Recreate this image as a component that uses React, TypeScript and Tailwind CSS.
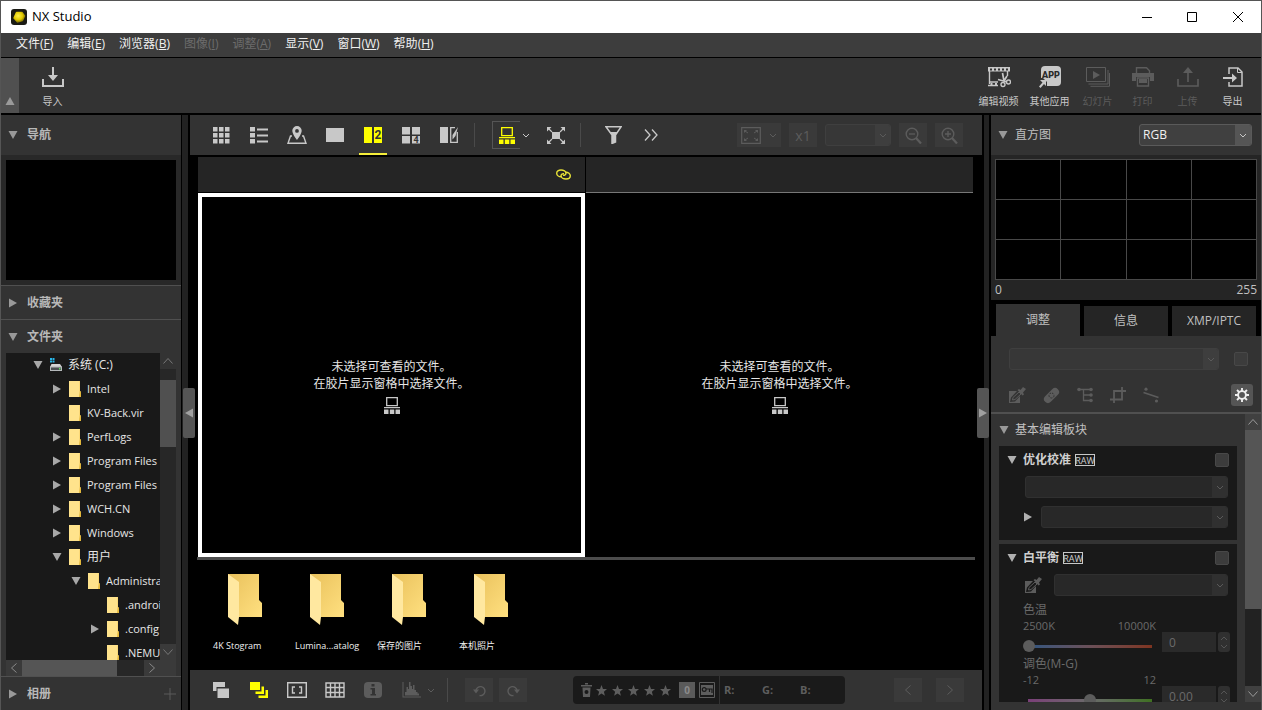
import type { ReactNode } from "react";

type IconProps = { className?: string };

type SvgProps = { w: number; h: number; className?: string; children: ReactNode };

const Svg = ({ w, h, className = "", children }: SvgProps) => (
  <svg
    width={w}
    height={h}
    viewBox={`0 0 ${w} ${h}`}
    fill="currentColor"
    className={`shrink-0 ${className}`}
    aria-hidden="true"
  >
    {children}
  </svg>
);

const DownTriangle = ({ className }: IconProps) => (
  <Svg w={10} h={8} className={className}>
    <path d="M0.5 0h9L5 8z" />
  </Svg>
);

const RightTriangle = ({ className }: IconProps) => (
  <Svg w={8} h={10} className={className}>
    <path d="M0 0.5v9L8 5z" />
  </Svg>
);

const Chevron = ({ className }: IconProps) => (
  <Svg w={8} h={5} className={className}>
    <path d="M1 1l3 3 3-3" fill="none" stroke="currentColor" />
  </Svg>
);

const WideChevron = ({ className }: IconProps) => (
  <Svg w={10} h={6} className={className}>
    <path d="M0.500 0.500l4.500 5 4.500-5" fill="none" stroke="currentColor" />
  </Svg>
);

// title bar

const AppLogo = () => (
  <Svg w={16} h={16}>
    <defs>
      <radialGradient id="logo" cx="0.4" cy="0.35" r="0.7">
        <stop offset="0" stopColor="#fff04a" />
        <stop offset="0.6" stopColor="#e0c800" />
        <stop offset="1" stopColor="#7a6a00" />
      </radialGradient>
    </defs>
    <rect width="16" height="16" rx="3" fill="#1a1a14" />
    <path
      d="M5.500 3.500h5.500l2.500 3.500-2 4.500-5 1.500L3 9z"
      fill="url(#logo)"
      stroke="url(#logo)"
      strokeWidth="1.500"
      strokeLinejoin="round"
    />
  </Svg>
);

const TitleBar = () => (
  <header className="flex h-8 shrink-0 items-center bg-white text-black">
    <div className="flex flex-1 items-center gap-[5px] pl-[10px]">
      <AppLogo />
      <h1 className="text-[13px]">NX Studio</h1>
    </div>
    <button aria-label="最小化" className="flex h-full w-[45px] items-center justify-center">
      <Svg w={10} h={10}>
        <path d="M0 5h10v1H0z" />
      </Svg>
    </button>
    <button aria-label="最大化" className="flex h-full w-[46px] items-center justify-center">
      <Svg w={10} h={10}>
        <path d="M0.5 0.5h9v9h-9z" fill="none" stroke="currentColor" />
      </Svg>
    </button>
    <button aria-label="关闭" className="flex h-full w-[46px] items-center justify-center">
      <Svg w={10} h={10}>
        <path d="M0 0l10 10M10 0L0 10" stroke="currentColor" />
      </Svg>
    </button>
  </header>
);

// menu bar

const menus = [
  { label: "文件", key: "F" },
  { label: "编辑", key: "E" },
  { label: "浏览器", key: "B" },
  { label: "图像", key: "I", disabled: true },
  { label: "调整", key: "A", disabled: true },
  { label: "显示", key: "V" },
  { label: "窗口", key: "W" },
  { label: "帮助", key: "H" },
];

const MenuBar = () => (
  <nav className="flex h-[25px] shrink-0 items-center gap-[14px] border-b border-black bg-[#3d3d3d] pb-[2px] pl-[15px] text-[12px] text-[#f0f0f0]">
    {menus.map((menu) => (
      <button key={menu.key} disabled={menu.disabled} className="whitespace-nowrap disabled:text-[#6c6c6c]">
        {menu.label}(<span className="underline underline-offset-1">{menu.key}</span>)
      </button>
    ))}
  </nav>
);

// main tool bar

const ImportIcon = () => (
  <Svg w={22} h={20}>
    <path d="M10 0h2v8h4l-5 6-5-6h4z" />
    <path d="M1 12v7h20v-7" fill="none" stroke="currentColor" strokeWidth="2" />
  </Svg>
);

const VideoIcon = () => (
  <Svg w={24} h={22}>
    <path d="M1 1h22v4.500H1z" />
    <path d="M3 2.500h2v2H3zM7 2.500h2v2H7zM11 2.500h2v2h-2zM15 2.500h2v2h-2zM19 2.500h2v2h-2z" fill="#333" />
    <path d="M2.500 5v13M2 16h9M1 19.500h10M20.500 5v5" fill="none" stroke="currentColor" strokeWidth="1.400" />
    <path d="M3.500 17h2v2h-2zM8 17h2v2H8z" />
    <path d="M15.500 7l1.500 8M11 13.500l9 2.500M17 15l3-5" fill="none" stroke="currentColor" strokeWidth="1.700" />
    <circle cx="16" cy="18.500" r="2" fill="none" stroke="currentColor" strokeWidth="1.400" />
    <circle cx="21.500" cy="16" r="2" fill="none" stroke="currentColor" strokeWidth="1.400" />
  </Svg>
);

const AppsIcon = () => (
  <Svg w={24} h={22}>
    <rect x="3" y="0" width="20" height="20" rx="4" />
    <path d="M0 12h5l4 4v6H0z" fill="#333" />
    <path d="M2 14h6v6l-2-2-3.500 4L1 20.500 4.500 16.500z" />
    <text
      x="13"
      y="12"
      fontSize="9"
      fontWeight="900"
      textAnchor="middle"
      fill="#2a2a2a"
      fontFamily="Roboto, sans-serif"
    >
      APP
    </text>
  </Svg>
);

const SlidesIcon = () => (
  <Svg w={24} h={20}>
    <path d="M0.500 0.500h19v14h-19z" fill="none" stroke="currentColor" />
    <path d="M7 4l7 4-7 4z" />
    <path d="M2.500 17h19.500V3M4.500 19.300h19V6" fill="none" stroke="currentColor" />
  </Svg>
);

const PrintIcon = () => (
  <Svg w={22} h={20}>
    <path d="M4.500 6V0.700h10l3 3V6" fill="none" stroke="currentColor" strokeWidth="1.400" />
    <path d="M0 6h22v8h-4v-4H4v4H0z" />
    <path d="M5.500 11h11v8h-11z" fill="none" stroke="currentColor" strokeWidth="1.400" />
    <path d="M7 12h8v4H7z" />
  </Svg>
);

const UploadIcon = () => (
  <Svg w={22} h={20}>
    <path d="M10.200 15V6H6l5-6 5 6h-4.200v9z" />
    <path d="M1 12v7h20v-7" fill="none" stroke="currentColor" strokeWidth="1.600" />
  </Svg>
);

const ExportIcon = () => (
  <Svg w={20} h={20}>
    <path d="M6 7V1h9l4 4v14H6v-4" fill="none" stroke="currentColor" strokeWidth="1.500" />
    <path d="M14.500 1v4.500H19" fill="none" stroke="currentColor" />
    <path d="M0 10h9V6.500l5 4.500-5 4.500V12H0z" />
  </Svg>
);

type ToolButtonProps = { label: string; icon: ReactNode; width?: string; disabled?: boolean };

const ToolButton = ({ label, icon, width = "w-[45px]", disabled }: ToolButtonProps) => (
  <button
    disabled={disabled}
    className={`flex flex-col items-center whitespace-nowrap text-[10px] leading-4 text-[#c8c8c8] disabled:text-[#5c5c5c] ${width}`}
  >
    <span className="flex h-7 items-center justify-center">{icon}</span>
    <span className="mt-[2px]">{label}</span>
  </button>
);

const MainToolBar = () => (
  <div className="flex h-[57px] shrink-0 border-b-2 border-black bg-[#333]">
    <button aria-label="收起工具栏" className="flex w-[18px] items-end justify-center bg-[#505050] pb-2 text-[#9a9a9a]">
      <DownTriangle className="rotate-180" />
    </button>
    <div className="flex flex-1 items-center justify-between pr-[6px] pl-[11px]">
      <ToolButton label="导入" icon={<ImportIcon />} />
      <div className="flex">
        <ToolButton label="编辑视频" width="w-[51px]" icon={<VideoIcon />} />
        <ToolButton label="其他应用" width="w-[51px]" icon={<AppsIcon />} />
        <ToolButton label="幻灯片" disabled icon={<SlidesIcon />} />
        <ToolButton label="打印" disabled icon={<PrintIcon />} />
        <ToolButton label="上传" disabled icon={<UploadIcon />} />
        <ToolButton label="导出" icon={<ExportIcon />} />
      </div>
    </div>
  </div>
);

// left side

const FolderIcon = () => (
  <Svg w={12} h={16}>
    <path d="M0 0h11v10l1 1v5H0z" fill="#fbd978" />
    <path d="M0 0h10v16H0z" fill="#ffe38c" />
    <path d="M11 10l1 1v5h-2z" fill="#e3b83c" />
  </Svg>
);

const DriveIcon = () => (
  <Svg w={12} h={14}>
    <path d="M0 0h2v2H0zM2.500 0h2v2h-2zM0 2.500h2v2H0zM2.500 2.500h2v2h-2z" fill="#29b6e8" />
    <path d="M1.500 6h8.500l2 3H0z" fill="#d4d4d4" />
    <path d="M0 8.500h12V13H0z" fill="#b5b9bb" />
    <path d="M1 9.500h10v2.500H1z" fill="#4b5052" />
    <path d="M9 10h1.500v1.500H9z" fill="#5fe05f" />
  </Svg>
);

type TreeNode = { name: string; level: string; open?: boolean; closed?: boolean; drive?: boolean; cjk?: boolean };

const LEVELS = ["pl-[26px]", "pl-[45px]", "pl-[64px]", "pl-[83px]"];

const tree: TreeNode[] = [
  { name: "系统 (C:)", level: LEVELS[0], open: true, drive: true, cjk: true },
  { name: "Intel", level: LEVELS[1], closed: true },
  { name: "KV-Back.vir", level: LEVELS[1] },
  { name: "PerfLogs", level: LEVELS[1], closed: true },
  { name: "Program Files", level: LEVELS[1], closed: true },
  { name: "Program Files", level: LEVELS[1], closed: true },
  { name: "WCH.CN", level: LEVELS[1], closed: true },
  { name: "Windows", level: LEVELS[1], closed: true },
  { name: "用户", level: LEVELS[1], open: true, cjk: true },
  { name: "Administrator", level: LEVELS[2], open: true },
  { name: ".android", level: LEVELS[3] },
  { name: ".config", level: LEVELS[3], closed: true },
  { name: ".NEMU", level: LEVELS[3] },
];

const FolderTree = () => (
  <div className="mx-[5px] flex min-h-0 flex-1 flex-col bg-[#191919]">
    <div className="flex min-h-0 flex-1">
      <ul className="flex-1 overflow-hidden text-[#e6e6e6]">
        {tree.map((node, i) => (
          <li key={i} className={`flex h-6 items-center whitespace-nowrap ${node.level}`}>
            <span className="flex w-[18px] shrink-0 items-center pl-px text-[#a8a8a8]">
              {node.open && <DownTriangle />}
              {node.closed && <RightTriangle className="ml-px" />}
            </span>
            {node.drive ? <DriveIcon /> : <FolderIcon />}
            <span className={`ml-[6px] ${node.cjk ? "text-[12px]" : "text-[11px]"}`}>{node.name}</span>
          </li>
        ))}
      </ul>
      <div className="flex w-4 shrink-0 flex-col bg-[#272727] text-[#777]">
        <button aria-label="向上滚动" className="flex h-4 items-center justify-center bg-[#333]">
          <WideChevron className="rotate-180" />
        </button>
        <div className="mt-[11px] h-[67px] bg-[#505050]" />
        <div className="flex-1" />
        <button aria-label="向下滚动" className="flex h-4 items-center justify-center bg-[#3a3a3a]">
          <WideChevron />
        </button>
      </div>
    </div>
    <div className="flex h-4 shrink-0 bg-[#272727] text-[#8a8a8a]">
      <button aria-label="向左滚动" className="flex w-4 items-center justify-center bg-[#3a3a3a]">
        <WideChevron className="rotate-90" />
      </button>
      <div className="w-[95px] bg-[#555]" />
      <div className="flex-1" />
      <button aria-label="向右滚动" className="flex w-4 items-center justify-center bg-[#3a3a3a]">
        <WideChevron className="-rotate-90" />
      </button>
      <div className="w-4 bg-[#3a3a3a]" />
    </div>
  </div>
);

type PanelTitleProps = { title: string; open?: boolean; className?: string; children?: ReactNode };

const PanelTitle = ({ title, open, className = "", children }: PanelTitleProps) => (
  <div className={`flex shrink-0 items-center bg-[#333] pr-[5px] pl-[6px] text-[#b8b8b8] ${className}`}>
    <button className="flex flex-1 items-center text-left text-[12px] font-bold">
      <span className="flex w-5 pl-px text-[#999]">
        {open ? <DownTriangle /> : <RightTriangle className="ml-px" />}
      </span>
      {title}
    </button>
    {children}
  </div>
);

const LeftPanel = () => (
  <aside className="flex w-[180px] shrink-0 flex-col bg-[#333]">
    <PanelTitle title="导航" open className="h-10" />
    <div className="bg-[#282828] p-[5px]">
      <div className="h-[120px] bg-black" />
    </div>
    <PanelTitle title="收藏夹" className="h-[34px] border-t border-[#505050]" />
    <PanelTitle title="文件夹" open className="h-[34px] border-t border-[#505050]" />
    <FolderTree />
    <PanelTitle title="相册" className="h-[34px] border-t border-[#505050]">
      <button aria-label="添加相册" className="text-[#5a5a5a]">
        <Svg w={12} h={12}>
          <path d="M0 6h12M6 0v12" stroke="currentColor" />
        </Svg>
      </button>
    </PanelTitle>
  </aside>
);

// center tool bar

const GridIcon = () => (
  <Svg w={17} h={17}>
    {[0, 6, 12].map((y) => [0, 6, 12].map((x) => <rect key={`${x}-${y}`} x={x} y={y} width="4.500" height="4.500" />))}
  </Svg>
);

const ListIcon = () => (
  <Svg w={18} h={17}>
    <path d="M0 0h5v4.500H0zM0 6h5v4.500H0zM0 12h5v4.500H0zM7 1.500h11v2H7zM7 7.500h11v2H7zM7 13.500h11v2H7z" />
  </Svg>
);

const MapIcon = () => (
  <Svg w={20} h={18}>
    <path d="M10 0a4.700 4.700 0 0 1 4.700 4.700C14.700 8 10 14 10 14S5.300 8 5.300 4.700A4.700 4.700 0 0 1 10 0zm0 3a1.900 1.900 0 1 0 0 3.800A1.900 1.900 0 0 0 10 3z" />
    <path d="M5 10H3.500L1 17.300h18L16.500 10H15" fill="none" stroke="currentColor" strokeWidth="1.400" />
  </Svg>
);

const SingleIcon = () => (
  <Svg w={18} h={14}>
    <path d="M0 0h18v14H0z" />
  </Svg>
);

const TwoIcon = () => (
  <Svg w={18} h={16}>
    <path d="M0 0h8v16H0zM10 0h8v16h-8z" />
    <text x="14" y="12" fontSize="12" fontWeight="700" textAnchor="middle" fill="#333" fontFamily="Roboto, sans-serif">
      2
    </text>
  </Svg>
);

const FourIcon = () => (
  <Svg w={18} h={17}>
    <path d="M0 0h8v7.500H0zM10 0h8v7.500h-8zM0 9h8v7.500H0zM10 9h8v7.500h-8z" />
    <text x="14" y="16" fontSize="9" fontWeight="700" textAnchor="middle" fill="#333" fontFamily="Roboto, sans-serif">
      4
    </text>
  </Svg>
);

const BeforeAfterIcon = () => (
  <Svg w={18} h={16}>
    <path d="M0 0h8v16H0z" />
    <path d="M15 0.700h-4.300v14.600h6.600V5" fill="none" stroke="currentColor" strokeWidth="1.300" />
    <path d="M18 0l-2.500 9-3 3.500v-4.500z" />
  </Svg>
);

const FilmIcon = ({ className }: IconProps) => (
  <Svg w={16} h={17} className={className}>
    <path d="M2.700 0.700h10.600v8H2.700z" fill="none" stroke="currentColor" strokeWidth="1.300" />
    <path d="M0 10h16v1.200H0zM0 12.500h4.500V17H0zM5.800 12.500h4.500V17H5.800zM11.500 12.500H16V17h-4.500z" />
  </Svg>
);

const FullIcon = () => (
  <Svg w={18} h={17}>
    <path d="M5 5h8v7H5zM0 0h4.500L0 4.500zM18 0v4.500L13.500 0zM0 17v-4.500L4.500 17zM18 17h-4.500l4.500-4.500z" />
    <path d="M1 1l4 4M17 1l-4 4M1 16l4-4M17 16l-4-4" stroke="currentColor" strokeWidth="1.200" />
  </Svg>
);

const FilterIcon = () => (
  <Svg w={17} h={18}>
    <path d="M1 0.800h15L10.500 9v7L7 17.500V9z" fill="none" stroke="currentColor" strokeWidth="1.500" />
    <path d="M4.500 6h8L10.500 9v7L7 17.500V9z" />
  </Svg>
);

const MoreIcon = () => (
  <Svg w={14} h={12}>
    <path d="M1 0.500L6 6l-5 5.500M8 0.500L13 6l-5 5.500" fill="none" stroke="currentColor" strokeWidth="1.300" />
  </Svg>
);

const FitIcon = () => (
  <Svg w={20} h={17}>
    <path d="M0.700 0.700h18.600v15.600H0.700z" fill="none" stroke="currentColor" strokeWidth="1.200" />
    <path d="M3 3h3L3 6zM17 3v3l-3-3zM3 14v-3l3 3zM17 14h-3l3-3z" />
    <path d="M4 4l3 2M16 4l-3 2M4 13l3-2M16 13l-3-2" stroke="currentColor" />
  </Svg>
);

const ZoomIcon = ({ plus }: { plus?: boolean }) => (
  <Svg w={17} h={17}>
    <circle cx="7" cy="7" r="5.800" fill="none" stroke="currentColor" strokeWidth="1.400" />
    <path d="M11 11l5 5.500" stroke="currentColor" strokeWidth="2.200" />
    <path d={plus ? "M4 7h6M7 4v6" : "M4 7h6"} stroke="currentColor" strokeWidth="1.300" />
  </Svg>
);

const viewModes = [
  { label: "缩略图", icon: <GridIcon /> },
  { label: "缩略图列表", icon: <ListIcon /> },
  { label: "地图", icon: <MapIcon /> },
  { label: "单张图像", icon: <SingleIcon /> },
  { label: "两张图像", icon: <TwoIcon />, active: true },
  { label: "四张图像", icon: <FourIcon /> },
  { label: "调整前后", icon: <BeforeAfterIcon /> },
];

const ghost = "flex h-6 items-center justify-center bg-[#3a3a3a] text-[#5c5c5c]";

type SelectProps = { label: string; className?: string; dark?: boolean };

// an empty, disabled drop-down
const Select = ({ label, className = "", dark }: SelectProps) => (
  <div
    className={`flex overflow-hidden rounded-[3px] border ${
      dark ? "border-[#303030] bg-[#282828] text-[#5a5a5a]" : "border-[#3f3f3f] bg-[#373737] text-[#5a5a5a]"
    } ${className}`}
  >
    <select disabled aria-label={label} className="min-w-0 flex-1 appearance-none" />
    <span className={`flex w-[15px] items-center justify-center ${dark ? "bg-[#303030]" : "bg-[#3e3e3e]"}`}>
      <Chevron />
    </span>
  </div>
);

const ViewToolBar = () => (
  <div className="flex h-[42px] shrink-0 items-center border-b-2 border-black bg-[#333] pr-[19px] pl-3 text-[#c8c8c8]">
    {viewModes.map((mode) => (
      <button
        key={mode.label}
        aria-label={mode.label}
        className={`mx-[5px] flex h-full w-7 items-center justify-center border-y-2 ${
          mode.active ? "border-t-transparent border-b-[#f5ee3a] text-[#ffff00]" : "border-transparent"
        }`}
      >
        {mode.icon}
      </button>
    ))}
    <div className="mr-[17px] ml-[6px] h-6 w-px bg-[#4a4a4a]" />
    <button
      aria-label="胶片显示"
      className="flex h-7 w-7 items-center justify-center border border-r-0 border-[#555] text-[#ffff00]"
    >
      <FilmIcon />
    </button>
    <button aria-label="胶片显示选项" className="mr-[17px] ml-[2px]">
      <Chevron />
    </button>
    <button aria-label="全屏">
      <FullIcon />
    </button>
    <div className="mr-6 ml-[15px] h-6 w-px bg-[#4a4a4a]" />
    <button aria-label="筛选">
      <FilterIcon />
    </button>
    <button aria-label="更多" className="ml-[22px]">
      <MoreIcon />
    </button>
    <div className="ml-auto flex items-center gap-2">
      <button disabled aria-label="适合屏幕" className={`${ghost} w-11 gap-2`}>
        <FitIcon />
        <Chevron />
      </button>
      <button disabled className={`${ghost} w-7 text-[14px]`}>
        x1
      </button>
      <Select label="缩放" className="h-[22px] w-[66px]" />
      <button disabled aria-label="缩小" className={`${ghost} w-7`}>
        <ZoomIcon />
      </button>
      <button disabled aria-label="放大" className={`${ghost} w-7`}>
        <ZoomIcon plus />
      </button>
    </div>
  </div>
);

// viewer

const LinkIcon = () => (
  <Svg w={15} h={11}>
    <path
      d="M5.500 7.800C2.500 7.800 0.700 6 0.700 4.200S2.500 1 5 1s5 1.300 5 3.200c0 1.500-1.500 2.300-3 2"
      fill="none"
      stroke="currentColor"
      strokeWidth="1.400"
    />
    <path
      d="M9.500 3.200c3 0 4.800 1.800 4.800 3.600S12.500 10 10 10 5 8.700 5 6.800c0-1.500 1.500-2.300 3-2"
      fill="none"
      stroke="currentColor"
      strokeWidth="1.400"
    />
  </Svg>
);

const ViewerPane = ({ selected }: { selected?: boolean }) => (
  <section className="flex min-h-0 flex-col">
    <div
      className={`flex h-9 shrink-0 items-center justify-end border-b bg-[#252525] pr-[14px] ${
        selected ? "border-black" : "border-[#777]"
      }`}
    >
      {selected && (
        <button aria-label="同步滚动" className="text-[#e8e337]">
          <LinkIcon />
        </button>
      )}
    </div>
    <div
      className={`flex flex-1 flex-col items-center justify-center border-4 bg-black pt-[22px] text-center text-[12px] leading-[17px] text-[#e6e6e6] ${
        selected ? "border-white" : "border-black"
      }`}
    >
      <p>未选择可查看的文件。</p>
      <p>在胶片显示窗格中选择文件。</p>
      <FilmIcon className="mt-[5px] text-[#c8c8c8]" />
    </div>
  </section>
);

// film strip

const BigFolder = () => (
  <Svg w={34} h={51}>
    <defs>
      <linearGradient id="folder" x1="0" y1="0" x2="1" y2="1">
        <stop offset="0" stopColor="#e9c15c" />
        <stop offset="1" stopColor="#ffe080" />
      </linearGradient>
    </defs>
    <path d="M0 0h31v26l3 3v14H0z" fill="url(#folder)" />
    <path d="M0 0l11 8v35l-1 8L0 43z" fill="#ffe8a0" />
  </Svg>
);

const folders = ["4K Stogram", "Lumina...atalog", "保存的图片", "本机照片"];

const FilmStrip = () => (
  <ul className="flex h-[110px] shrink-0 bg-black pt-[14px] pl-[23px]">
    {folders.map((name) => (
      <li key={name} className="w-[82px] whitespace-nowrap text-[9px] leading-3 text-[#f0f0f0]">
        <button className="flex flex-col text-left">
          <span className="pl-[15px]">
            <BigFolder />
          </span>
          <span className="mt-[15px]">{name}</span>
        </button>
      </li>
    ))}
  </ul>
);

// bottom bar

const StackTwoIcon = () => (
  <Svg w={16} h={16}>
    <path d="M0 0h12v5H3.500v4H0z" />
    <path d="M4.500 6.500H16V16H4.500z" />
  </Svg>
);

const StackThreeIcon = () => (
  <Svg w={18} h={16}>
    <path d="M0 0h10v8H0z" />
    <path d="M11.500 4.500H14V12H5.500V9.500h6zM15.500 8H18v8H8.500v-2.500h7z" />
  </Svg>
);

const FocusIcon = () => (
  <Svg w={20} h={16}>
    <path d="M0.700 0.700h18.600v14.600H0.700z" fill="none" stroke="currentColor" strokeWidth="1.400" />
    <path d="M8 5H5.500v6H8M12 5h2.500v6H12" fill="none" stroke="currentColor" strokeWidth="1.400" />
  </Svg>
);

const TableIcon = () => (
  <Svg w={20} h={16}>
    <path
      d="M1 1h18v14H1zM1 5.500h18M1 10.500h18M5.500 1v14M10 1v14M14.500 1v14"
      fill="none"
      stroke="currentColor"
      strokeWidth="1.400"
    />
  </Svg>
);

const InfoIcon = () => (
  <Svg w={18} h={16}>
    <rect width="18" height="16" rx="4" />
    <path d="M7.500 2h3v2.500h-3zM6.500 6H11v6h1v1.500H6.500V12H8V7.500H6.500z" fill="#333" />
  </Svg>
);

const HistogramIcon = () => (
  <Svg w={19} h={16}>
    <path d="M0.500 0h1v14.500H19v1H0.500z" />
    <path d="M3 13.500V10h1.500V5H6v2h1V0h1.500v4H10v3h1V3h1.500v5H14v2h1.500v1.500H17v2z" />
  </Svg>
);

const RotateIcon = ({ right }: { right?: boolean }) => (
  <Svg w={13} h={13} className={right ? "-scale-x-100" : ""}>
    <path d="M3 6.500a4.500 4.500 0 1 1 3.500 5" fill="none" stroke="currentColor" strokeWidth="1.400" />
    <path d="M0 5.500h6L3 9.500z" />
  </Svg>
);

const Star = () => (
  <Svg w={11} h={11}>
    <path d="M5.500 0l1.500 3.900 4 .2-3.100 2.600 1 4.100-3.400-2.300-3.400 2.300 1-4.100L0 4.100l4-.2z" />
  </Svg>
);

const TrashIcon = () => (
  <Svg w={11} h={14}>
    <path d="M4 0h3v1.500H4zM0 2h11v1.500H0z" />
    <path fillRule="evenodd" d="M1.500 4.500h8L9 14H2zM5.500 7a2 2 0 1 0 0 4 2 2 0 0 0 0-4z" />
  </Svg>
);

const KeyIcon = () => (
  <Svg w={16} h={16}>
    <path d="M0.500 0.500h15v15H0.500z" fill="none" stroke="currentColor" />
    <path d="M2 3h12v10H2z" />
    <path d="M7 7h6v4M10.500 7v3" fill="none" stroke="#1a1a1a" strokeWidth="1.200" />
    <circle cx="5.200" cy="7.500" r="1.900" fill="none" stroke="#1a1a1a" strokeWidth="1.200" />
  </Svg>
);

const RatingBar = () => (
  <div className="ml-[46px] flex h-7 w-[272px] items-center rounded-[4px] bg-[#1a1a1a] pl-2 text-[#5e5e5e]">
    <button disabled aria-label="删除">
      <TrashIcon />
    </button>
    <div className="ml-1 flex gap-[5px]">
      {[1, 2, 3, 4, 5].map((n) => (
        <button key={n} disabled aria-label={`${n} 星`}>
          <Star />
        </button>
      ))}
    </div>
    <button
      disabled
      className="ml-2 flex size-4 items-center justify-center bg-[#5a5a5a] text-[10px] font-bold text-[#8a8a8a]"
    >
      0
    </button>
    <button disabled aria-label="保护" className="ml-1">
      <KeyIcon />
    </button>
    <dl className="ml-1 flex h-full flex-1 items-center border-l border-[#333] pl-1 text-[11px] font-bold">
      <dt className="w-[38px]">R:</dt>
      <dt className="w-[38px]">G:</dt>
      <dt>B:</dt>
    </dl>
  </div>
);

const BottomBar = () => (
  <div className="flex h-10 shrink-0 items-center bg-[#333] pr-[18px] pl-[21px] text-[#c8c8c8]">
    <div className="flex items-center gap-[18px]">
      <button aria-label="叠放" className="flex w-5 justify-center">
        <StackTwoIcon />
      </button>
      <button aria-label="展开" className="flex w-5 justify-center text-[#ffff00]">
        <StackThreeIcon />
      </button>
      <button aria-label="对焦点" className="flex w-5 justify-center">
        <FocusIcon />
      </button>
      <button aria-label="网格" className="flex w-5 justify-center">
        <TableIcon />
      </button>
      <button disabled aria-label="信息" className="flex w-5 justify-center text-[#5c5c5c]">
        <InfoIcon />
      </button>
      <button disabled aria-label="直方图显示" className="flex w-5 justify-center text-[#5c5c5c]">
        <HistogramIcon />
      </button>
    </div>
    <Chevron className="ml-[6px] text-[#5c5c5c]" />
    <div className="mr-[17px] ml-3 h-6 w-px bg-[#4a4a4a]" />
    <button disabled aria-label="向左旋转" className={`${ghost} w-7`}>
      <RotateIcon />
    </button>
    <button disabled aria-label="向右旋转" className={`${ghost} ml-[6px] w-7`}>
      <RotateIcon right />
    </button>
    <RatingBar />
    <div className="ml-auto flex gap-[14px]">
      <button disabled aria-label="上一张" className={`${ghost} w-7`}>
        <WideChevron className="rotate-90" />
      </button>
      <button disabled aria-label="下一张" className={`${ghost} w-7`}>
        <WideChevron className="-rotate-90" />
      </button>
    </div>
  </div>
);

const Center = () => (
  <main className="flex min-w-0 flex-1 flex-col bg-black">
    <ViewToolBar />
    <div className="grid min-h-0 flex-1 grid-cols-2 gap-px pr-[9px] pl-2">
      <ViewerPane selected />
      <ViewerPane />
    </div>
    <div className="mx-[7px] h-[3px] shrink-0 bg-[#4c4c4c]" />
    <FilmStrip />
    <BottomBar />
  </main>
);

// right side

const PickerIcon = () => (
  <Svg w={17} h={16}>
    <path d="M0 4h8L2 10.500 1 15l5-.5L11 9v7H0z" />
    <path d="M3.500 13l.5-2.500L10 5l2 2-6 5.500z" fill="none" stroke="currentColor" />
    <path d="M8.500 3l1.500-1 1.500 1L14 0l3 2-3 3.500 1 2-1.500 1z" />
  </Svg>
);

const HealIcon = () => (
  <Svg w={17} h={17}>
    <rect x="-0.500" y="4.500" width="18" height="8" rx="4" transform="rotate(-45 8.500 8.500)" />
    <circle cx="8.500" cy="8.500" r="2.500" fill="none" stroke="#333" strokeDasharray="2 1" />
  </Svg>
);

const PointsIcon = () => (
  <Svg w={16} h={16}>
    <path d="M2 2.500h12M6.500 2.500v11h7M6.500 8h7" fill="none" stroke="currentColor" strokeWidth="1.300" />
    <circle cx="2" cy="2.500" r="1.800" />
    <circle cx="14" cy="2.500" r="1.800" />
    <circle cx="14" cy="8" r="1.800" />
    <circle cx="14" cy="13.500" r="1.800" />
  </Svg>
);

const CropIcon = () => (
  <Svg w={16} h={16}>
    <path d="M4 16V4h12M0 12.500h12V0M0 12.500h4M12 4v8.500" fill="none" stroke="currentColor" strokeWidth="1.800" />
  </Svg>
);

const StraightenIcon = () => (
  <Svg w={16} h={16}>
    <path d="M0.500 5.500l15 5" stroke="currentColor" strokeWidth="1.600" />
    <circle cx="3" cy="2.200" r="1.600" />
    <circle cx="13.500" cy="14" r="1.600" />
  </Svg>
);

const GearIcon = () => (
  <Svg w={14} h={14}>
    <circle cx="7" cy="7" r="3.900" fill="none" stroke="currentColor" strokeWidth="1.900" />
    <path
      d="M7 0v3M7 11v3M0 7h3M11 7h3M2 2l2.200 2.200M9.800 9.800L12 12M12 2L9.800 4.200M4.200 9.800L2 12"
      stroke="currentColor"
      strokeWidth="1.900"
    />
  </Svg>
);

const CheckBox = ({ label }: { label: string }) => (
  <input
    type="checkbox"
    disabled
    aria-label={label}
    className="size-[14px] shrink-0 appearance-none rounded-[2px] border border-[#484848] bg-[#3c3c3c]"
  />
);

const RawBadge = () => (
  <span className="ml-1 flex h-3 w-5 items-center justify-center border border-[#c8c8c8] text-[9px] leading-none font-normal text-[#d0d0d0]">
    RAW
  </span>
);

const CardTitle = ({ title }: { title: string }) => (
  <div className="flex h-7 items-center justify-between px-2">
    <button className="flex items-center text-[12px] font-bold text-[#d0d0d0]">
      <span className="w-4 text-[#b0b0b0]">
        <DownTriangle />
      </span>
      {title}
      <RawBadge />
    </button>
    <CheckBox label={title} />
  </div>
);

type SliderRowProps = {
  id: string;
  title: string;
  min: number;
  max: number;
  unit?: string;
  value: number;
  shown: string;
  track: string;
};

const SliderRow = ({ id, title, min, max, unit = "", value, shown, track }: SliderRowProps) => (
  <div className="flex h-[54px] flex-col pr-[7px] pl-6 text-[12px] leading-4 text-[#6a6a6a]">
    <label htmlFor={id}>{title}</label>
    <div className="flex">
      <div className="flex w-[133px] flex-col">
        <div className="flex justify-between text-[11px]">
          <span>{min + unit}</span>
          <span>{max + unit}</span>
        </div>
        <div className="flex h-6 items-center">
          <input
            id={id}
            type="range"
            disabled
            min={min}
            max={max}
            defaultValue={value}
            className={`h-3 w-full appearance-none bg-[length:124px_3px] bg-[position:5px_5px] bg-no-repeat [&::-webkit-slider-thumb]:size-3 [&::-webkit-slider-thumb]:appearance-none [&::-webkit-slider-thumb]:rounded-full [&::-webkit-slider-thumb]:bg-[#5c5c5c] ${track}`}
          />
        </div>
      </div>
      <input
        aria-label={`${title}数值`}
        disabled
        defaultValue={shown}
        className="mt-[14px] ml-[6px] h-5 w-[54px] bg-[#2a2a2a] pl-[7px] text-[12px] text-[#6a6a6a]"
      />
      <div className="mt-[14px] ml-[2px] flex h-5 w-3 flex-col items-center justify-center gap-[3px] rounded-[3px] bg-[#303030] text-[#555]">
        <Chevron className="rotate-180" />
        <Chevron />
      </div>
    </div>
  </div>
);

const tabs = ["调整", "信息", "XMP/IPTC"];

const RightPanel = () => (
  <aside className="flex w-[270px] shrink-0 flex-col bg-[#333] text-[12px] text-[#c0c0c0]">
    <div className="flex h-10 shrink-0 items-center justify-between pr-[9px] pl-[7px]">
      <button className="flex items-center">
        <span className="w-[17px] text-[#999]">
          <DownTriangle />
        </span>
        直方图
      </button>
      <div className="flex h-[22px] w-[113px] overflow-hidden rounded-[3px] border border-[#5a5a5a] bg-[#404040]">
        <select aria-label="通道" className="min-w-0 flex-1 appearance-none pl-[3px] text-[#f0f0f0]">
          <option>RGB</option>
        </select>
        <span className="flex w-4 items-center justify-center bg-[#555] text-[#c8c8c8]">
          <Chevron />
        </span>
      </div>
    </div>

    <div className="shrink-0 bg-[#252525] px-1 pt-1">
      <div className="grid h-[121px] grid-cols-4 grid-rows-3 gap-px border border-[#484848] bg-[#484848]">
        {Array.from({ length: 12 }, (_, i) => (
          <div key={i} className="bg-black" />
        ))}
      </div>
      <div className="flex h-5 justify-between leading-5">
        <span>0</span>
        <span>255</span>
      </div>
    </div>

    <div className="flex h-9 shrink-0 items-end gap-1 bg-black px-[5px]">
      {tabs.map((tab, i) => (
        <button key={tab} className={`flex-1 ${i === 0 ? "h-8 bg-[#333]" : "h-[30px] bg-[#252525]"}`}>
          {tab}
        </button>
      ))}
    </div>

    <div className="shrink-0 border-b-2 border-[#505050] pt-3 pr-2 pl-[18px]">
      <div className="flex items-center justify-between pr-[5px]">
        <Select label="调整预设" className="h-[22px] w-[210px]" />
        <CheckBox label="应用预设" />
      </div>
      <div className="flex h-[42px] items-center pt-2 text-[#5c5c5c]">
        <div className="flex flex-1 items-center gap-[17px]">
          <button disabled aria-label="灰点">
            <PickerIcon />
          </button>
          <button disabled aria-label="修饰画笔">
            <HealIcon />
          </button>
          <button disabled aria-label="颜色控制点">
            <PointsIcon />
          </button>
          <button disabled aria-label="裁剪">
            <CropIcon />
          </button>
          <button disabled aria-label="校直">
            <StraightenIcon />
          </button>
        </div>
        <button
          aria-label="设置"
          className="flex size-[22px] items-center justify-center rounded-[3px] bg-[#555] text-[#eee]"
        >
          <GearIcon />
        </button>
      </div>
    </div>

    <div className="mb-2 flex min-h-0 flex-1">
      <div className="flex-1 overflow-hidden px-2">
        <button className="flex h-8 items-center">
          <span className="w-4 text-[#999]">
            <DownTriangle />
          </span>
          基本编辑板块
        </button>
        <div className="mb-1 flex h-[94px] flex-col bg-[#191919]">
          <CardTitle title="优化校准" />
          <Select dark label="优化校准" className="mt-[2px] mr-[9px] ml-[26px] h-[22px]" />
          <div className="mt-2 mr-[9px] ml-[25px] flex items-center">
            <button aria-label="展开优化校准" className="w-[17px] text-[#b0b0b0]">
              <RightTriangle />
            </button>
            <Select dark label="优化校准选项" className="h-[22px] flex-1" />
          </div>
        </div>
        <div className="bg-[#191919]">
          <CardTitle title="白平衡" />
          <div className="mt-[2px] mr-[9px] mb-[6px] ml-[26px] flex items-center justify-between text-[#5c5c5c]">
            <PickerIcon />
            <Select dark label="白平衡" className="h-[22px] w-[174px]" />
          </div>
          <SliderRow
            id="temperature"
            title="色温"
            min={2500}
            max={10000}
            unit="K"
            value={2500}
            shown="0"
            track="bg-linear-to-r from-[#2f5580] via-[#6b5058] to-[#7e3420]"
          />
          <SliderRow
            id="tint"
            title="调色(M-G)"
            min={-12}
            max={12}
            value={0}
            shown="0.00"
            track="bg-linear-to-r from-[#7a3f78] via-[#6a6a6a] to-[#3f7020]"
          />
        </div>
      </div>
      <div className="flex w-4 shrink-0 flex-col bg-[#222] text-[#999]">
        <button aria-label="向上滚动" className="flex h-4 items-center justify-center bg-[#404040]">
          <WideChevron className="rotate-180" />
        </button>
        <div className="h-[179px] bg-[#555]" />
        <div className="flex-1" />
        <button aria-label="向下滚动" className="flex h-4 items-center justify-center bg-[#404040]">
          <WideChevron />
        </button>
      </div>
    </div>
  </aside>
);

type SplitterProps = { side: "left" | "right" };

const Splitter = ({ side }: SplitterProps) => (
  <div
    className={`relative w-[9px] shrink-0 border-r-2 border-black bg-[#222] ${side === "left" ? "border-l" : "border-l-2"}`}
  >
    <button
      aria-label={side === "left" ? "收起左侧面板" : "收起右侧面板"}
      className={`absolute top-1/2 z-10 flex h-[50px] w-3 -translate-y-1/2 items-center justify-center rounded-[2px] bg-[#555] text-[#a0a0a0] ${
        side === "left" ? "left-px" : "right-0"
      }`}
    >
      <RightTriangle className={side === "left" ? "rotate-180" : ""} />
    </button>
  </div>
);

export default function App() {
  return (
    <div className="flex h-screen flex-col overflow-hidden border-x border-t border-[#555] bg-black font-['Open_Sans','Noto_Sans_CJK_SC',sans-serif]">
      <TitleBar />
      <MenuBar />
      <MainToolBar />
      <div className="flex min-h-0 flex-1">
        <LeftPanel />
        <Splitter side="left" />
        <Center />
        <Splitter side="right" />
        <RightPanel />
      </div>
    </div>
  );
}
